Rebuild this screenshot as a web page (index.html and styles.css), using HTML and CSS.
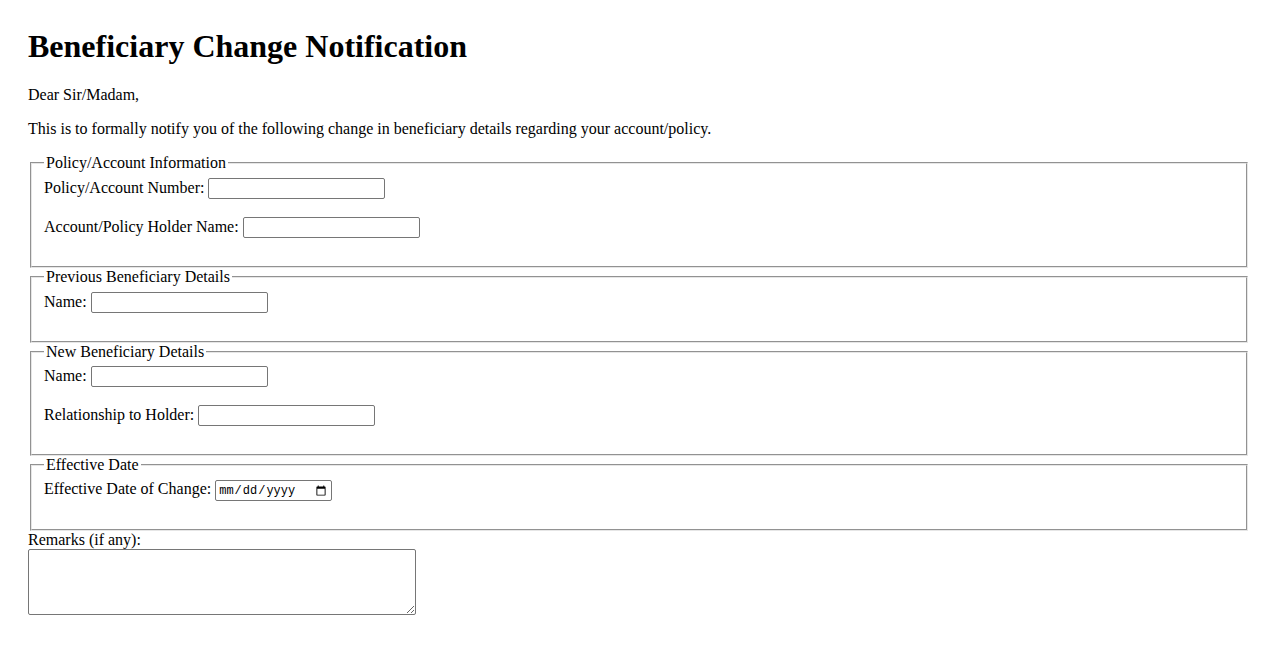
FILE: index.html
```html
<!DOCTYPE html>
<html lang="en">
<head>
<meta charset="utf-8">
<title>Beneficiary Change Notification</title>
<link rel="stylesheet" href="styles.css">
</head>
<body>
<div class="page">
  <h1 class="title">Beneficiary Change Notification</h1>
  <p class="para">Dear Sir/Madam,</p>
  <p class="para">This is to formally notify you of the following change in beneficiary details regarding your account/policy.</p>
  <form class="form">
    <fieldset class="group">
      <legend class="legend">Policy/Account Information</legend>
      <div class="row"><label class="lbl" for="acct">Policy/Account Number:</label> <input class="field" id="acct" type="text"></div>
      <div class="row"><label class="lbl" for="holder">Account/Policy Holder Name:</label> <input class="field" id="holder" type="text"></div>
    </fieldset>
    <fieldset class="group">
      <legend class="legend">Previous Beneficiary Details</legend>
      <div class="row"><label class="lbl" for="prev">Name:</label> <input class="field" id="prev" type="text"></div>
    </fieldset>
    <fieldset class="group">
      <legend class="legend">New Beneficiary Details</legend>
      <div class="row"><label class="lbl" for="newname">Name:</label> <input class="field" id="newname" type="text"></div>
      <div class="row"><label class="lbl" for="rel">Relationship to Holder:</label> <input class="field" id="rel" type="text"></div>
    </fieldset>
    <fieldset class="group">
      <legend class="legend">Effective Date</legend>
      <div class="row"><label class="lbl" for="date">Effective Date of Change:</label> <input class="date" id="date" type="date"></div>
    </fieldset>
    <label class="remarks-label" for="remarks">Remarks (if any):</label>
    <textarea class="remarks" id="remarks" rows="4"></textarea>
  </form>
</div>
</body>
</html>
```
FILE: styles.css
```css
body {
  margin: 8px;
  font-family: "Liberation Serif", "Times New Roman", serif;
  font-size: 16px;
  color: #000;
  background: #fff;
}
.page {
  padding: 20px;
}
.title {
  margin: 0 0 21.44px;
  font-size: 32px;
  font-weight: bold;
}
.para {
  margin: 16px 0;
}
.form {
  margin: 0;
}
.group {
  margin: 0 2px;
  padding: 5.6px 12px 10px;
  border: 2px groove #e6e6e6;
}
.legend {
  padding: 0 2px;
}
.row {
  margin-bottom: 18px;
}
.field {
  box-sizing: border-box;
  width: 177px;
  height: 21px;
  padding: 1px 2px;
  border: 1px solid #767676;
  border-radius: 2px;
  font-family: "Liberation Sans", Arial, sans-serif;
  font-size: 13.33px;
}
.date {
  box-sizing: border-box;
  width: 117px;
  height: 21px;
  padding: 1px 2px;
  border: 1px solid #767676;
  border-radius: 2px;
  font-family: "Liberation Mono", monospace;
  font-size: 12px;
}
.remarks-label {
  display: block;
}
.remarks {
  box-sizing: border-box;
  width: 388px;
  height: 66px;
  padding: 2px;
  border: 1px solid #767676;
  border-radius: 2px;
  font-family: "Liberation Mono", monospace;
  font-size: 13.33px;
}
```
